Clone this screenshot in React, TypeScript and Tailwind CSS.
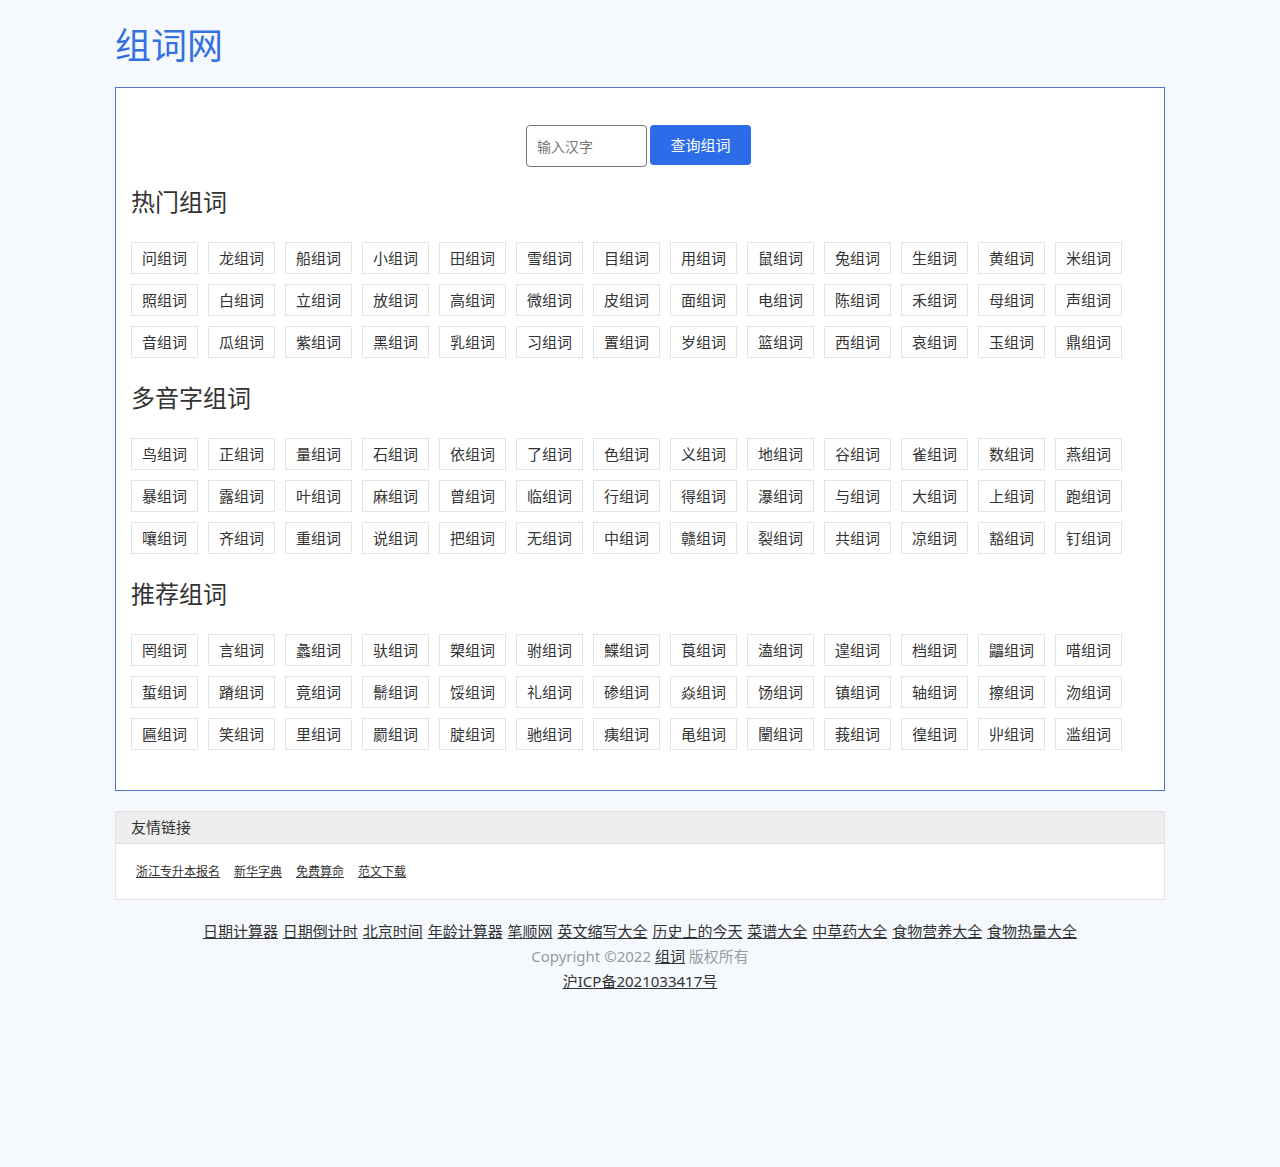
import React from 'react';

const hot = [
  '问', '龙', '船', '小', '田', '雪', '目', '用', '鼠', '兔', '生', '黄', '米',
  '照', '白', '立', '放', '高', '微', '皮', '面', '电', '陈', '禾', '母', '声',
  '音', '瓜', '紫', '黑', '乳', '习', '置', '岁', '篮', '西', '哀', '玉', '鼎',
];

const poly = [
  '鸟', '正', '量', '石', '依', '了', '色', '义', '地', '谷', '雀', '数', '燕',
  '暴', '露', '叶', '麻', '曾', '临', '行', '得', '瀑', '与', '大', '上', '跑',
  '嚷', '齐', '重', '说', '把', '无', '中', '赣', '裂', '共', '凉', '豁', '钉',
];

const rec = [
  '罔', '言', '蠡', '驮', '槊', '驸', '鰈', '莨', '溘', '遑', '档', '鼺', '唶',
  '蜇', '蹐', '竟', '鬋', '馁', '礼', '碜', '焱', '饧', '镇', '轴', '擦', '沕',
  '匾', '笑', '里', '罽', '腚', '驰', '痍', '黾', '闉', '莪', '徨', '丱', '滥',
];

const friends = ['浙江专升本报名', '新华字典', '免费算命', '范文下载'];

const footerLinks = [
  '日期计算器', '日期倒计时', '北京时间', '年龄计算器', '笔顺网', '英文缩写大全',
  '历史上的今天', '菜谱大全', '中草药大全', '食物营养大全', '食物热量大全',
];

function Section({ title, chars, first }: { title: string; chars: string[]; first?: boolean }) {
  return (
    <div className={first ? 'mt-[17px]' : 'mt-[22px]'}>
      <h2 className="text-[24px] leading-[36px] h-[36px] text-[#333] font-normal">{title}</h2>
      <div className="mt-[22px] flex flex-wrap gap-[10px]">
        {chars.map((c, i) => (
          <a
            key={i}
            href="#"
            className="w-[67px] h-[32px] flex items-center justify-center border border-[#e3e3e3] bg-white text-[15px] text-[#333]"
          >
            {c}组词
          </a>
        ))}
      </div>
    </div>
  );
}

export default function App() {
  return (
    <div className="min-h-screen bg-[#f5f9fe] font-['Microsoft_YaHei','Noto_Sans','Noto_Sans_CJK_SC',sans-serif] text-[#333]">
      <div className="w-[1050px] mx-auto">
        <div className="pt-[18px] mb-[19px]">
          <a href="#" className="text-[36px] leading-[50px] text-[#3470e0] font-['Noto_Sans_CJK_SC',sans-serif]">组词网</a>
        </div>

        <div className="border border-[#5174c4] bg-white px-[15px] pt-[37px] pb-[40px]">
          <div className="flex justify-center items-start pr-[3px]">
            <input
              type="text"
              placeholder="输入汉字"
              className="w-[121px] h-[42px] mr-[3px] border border-[#767676] rounded-[4px] px-[10px] text-[14px] placeholder:text-[#777] outline-none"
            />
            <button className="w-[101px] h-[40px] rounded-[4px] bg-[#2c6ce8] text-white text-[15px]">查询组词</button>
          </div>
          <Section title="热门组词" chars={hot} first />
          <Section title="多音字组词" chars={poly} />
          <Section title="推荐组词" chars={rec} />
        </div>

        <div className="mt-[20px] border border-[#e4e4e4] bg-white">
          <div className="h-[32px] bg-[#eeeeee] border-b border-[#dddddd] px-[15px] flex items-center text-[15px] text-[#333]">
            友情链接
          </div>
          <div className="h-[55px] pl-[20px] flex items-center gap-[14px] text-[12px]">
            {friends.map((f) => (
              <a key={f} href="#" className="underline text-[#333]">{f}</a>
            ))}
          </div>
        </div>

        <div className="mt-[19px] text-center text-[15px] leading-[25px]">
          <div className="[word-spacing:1px]">
            {footerLinks.map((l, i) => (
              <React.Fragment key={l}>
                {i > 0 && ' '}
                <a href="#" className="underline text-[#333]">{l}</a>
              </React.Fragment>
            ))}
          </div>
          <div className="text-[#999]">
            Copyright ©2022 <a href="#" className="underline text-[#333]">组词</a> 版权所有
          </div>
          <div>
            <a href="#" className="underline text-[#333]">沪ICP备2021033417号</a>
          </div>
        </div>
      </div>
    </div>
  );
}
